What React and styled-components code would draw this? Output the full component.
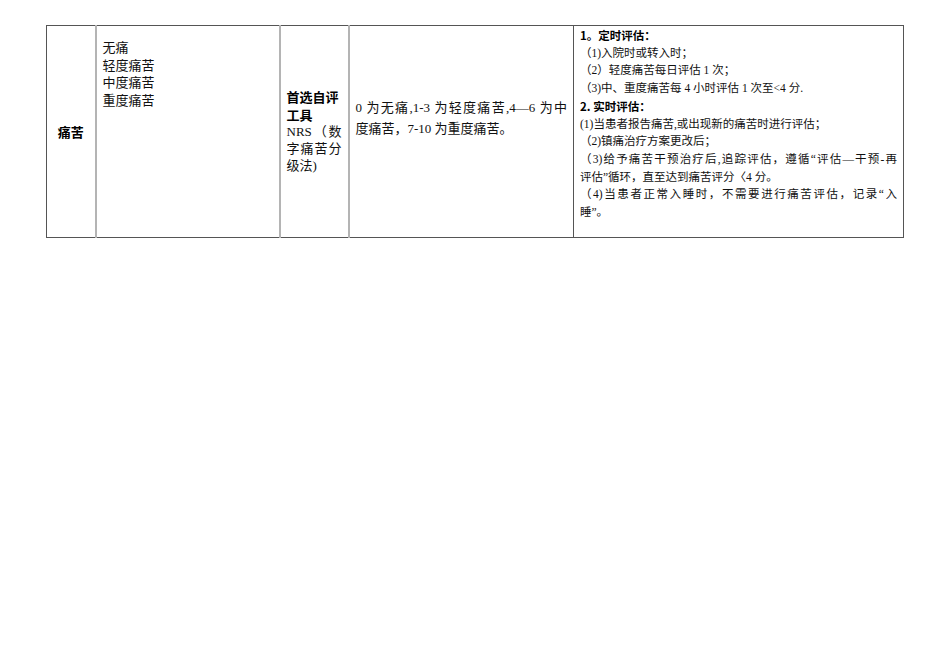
import React from "react";
import styled, { createGlobalStyle } from "styled-components";

const GlobalStyle = createGlobalStyle`
  html, body {
    margin: 0;
    padding: 0;
    background: #ffffff;
  }
  body {
    font-family: "Liberation Serif", "Noto Sans CJK SC", serif;
    color: #111;
  }
`;

const Page = styled.div`
  width: 950px;
  height: 672px;
  padding: 25px 0 0 46px;
  box-sizing: border-box;
`;

const Table = styled.table`
  border-collapse: collapse;
  table-layout: fixed;
  width: 857px;
  height: 213px;
  border: 1px solid #555;
`;

const Cell = styled.td`
  width: ${(p) => p.$w}px;
  box-sizing: border-box;
  vertical-align: ${(p) => p.$valign || "top"};
  padding: ${(p) => p.$pad || "0 6px"};
  border-left: ${(p) => (p.$first || p.$dark ? "1px solid #555" : "2px solid #b4b4b4")};
  font-size: ${(p) => p.$size || 13}px;
  line-height: ${(p) => p.$lh || 17.5}px;
`;

const Heading = styled.div`
  font-family: "Noto Sans CJK SC", "Liberation Sans", sans-serif;
  font-weight: 700;
  font-size: ${(p) => p.$size || 13}px;
  color: #000;
  text-align: ${(p) => p.$align || "left"};
`;

const Line = styled.div`
  text-align: ${(p) => (p.$justify ? "justify" : "left")};
  text-align-last: ${(p) => (p.$justify ? "justify" : "auto")};
  white-space: ${(p) => (p.$justify ? "normal" : "nowrap")};
`;

const Spread = styled.div`
  display: flex;
  justify-content: space-between;
  white-space: nowrap;
`;

const scheduled = [
  { t: "（1)入院时或转入时；" },
  { t: "（2）轻度痛苦每日评估 1 次；" },
  { t: "（3)中、重度痛苦每 4 小时评估 1 次至<4 分." },
];

const realtime = [
  { t: "(1)当患者报告痛苦,或出现新的痛苦时进行评估；" },
  { t: "（2)镇痛治疗方案更改后；" },
  { t: "（3)给予痛苦干预治疗后,追踪评估，遵循“评估—干预-再", j: true },
  { t: "评估”循环，直至达到痛苦评分〈4 分。" },
  { t: "（4)当患者正常入睡时，不需要进行痛苦评估，记录“入", j: true },
  { t: "睡”。" },
];

export default function App() {
  return (
    <Page>
      <GlobalStyle />
      <Table>
        <tbody>
          <tr>
            <Cell $w={49} $first $valign="middle" $pad="0">
              <Heading $align="center">痛苦</Heading>
            </Cell>
            <Cell $w={184} $pad="13px 6px 0 6px">
              <Line>无痛</Line>
              <Line>轻度痛苦</Line>
              <Line>中度痛苦</Line>
              <Line>重度痛苦</Line>
            </Cell>
            <Cell $w={69} $valign="middle" $pad="0 6px 0 6px" $lh={17.3}>
              <Heading>首选自评</Heading>
              <Heading>工具</Heading>
              <Spread>
                <span>NRS</span>
                <span>（</span>
                <span>数</span>
              </Spread>
              <Spread>
                <span>字</span>
                <span>痛</span>
                <span>苦</span>
                <span>分</span>
              </Spread>
              <Line>级法)</Line>
            </Cell>
            <Cell $w={225} $pad="71px 6px 0 6px" $lh={21}>
              <Line $justify>0 为无痛,1-3 为轻度痛苦,4—6 为中</Line>
              <Line>度痛苦，7-10 为重度痛苦。</Line>
            </Cell>
            <Cell $w={330} $dark $size={11.5} $lh={17.7} $pad="1px 6px 0 6px">
              <Heading $size={11.5}>1。定时评估：</Heading>
              {scheduled.map((l, i) => (
                <Line key={i} $justify={l.j}>{l.t}</Line>
              ))}
              <Heading $size={11.5}>2. 实时评估：</Heading>
              {realtime.map((l, i) => (
                <Line key={i} $justify={l.j}>{l.t}</Line>
              ))}
            </Cell>
          </tr>
        </tbody>
      </Table>
    </Page>
  );
}
